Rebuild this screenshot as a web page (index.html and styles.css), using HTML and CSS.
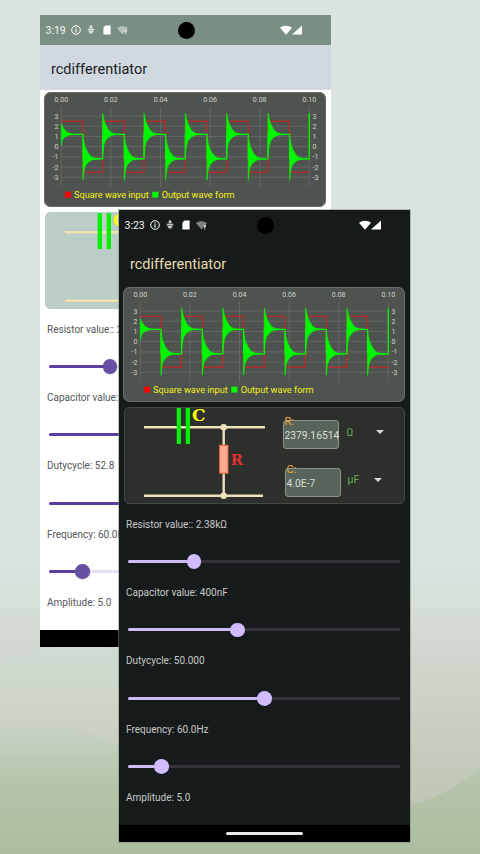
FILE: index.html
```html
<!DOCTYPE html>
<html lang="en">
<head>
<meta charset="utf-8">
<title>rcdifferentiator</title>
<link rel="stylesheet" href="styles.css">
</head>
<body>
<div class="canvas">
  <svg class="hills" viewBox="0 0 480 854" aria-hidden="true">
    <defs>
      <linearGradient id="sky" gradientUnits="userSpaceOnUse" x1="0" y1="560" x2="0" y2="800">
        <stop offset="0" stop-color="#dbe4df"/><stop offset="1" stop-color="#bec6b5"/>
      </linearGradient>
      <linearGradient id="hill-back" gradientUnits="userSpaceOnUse" x1="0" y1="646" x2="0" y2="760">
        <stop offset="0" stop-color="#d3dcd2"/><stop offset="1" stop-color="#c6cfbf"/>
      </linearGradient>
      <linearGradient id="hill-front" gradientUnits="userSpaceOnUse" x1="0" y1="720" x2="0" y2="854">
        <stop offset="0" stop-color="#cbd4c8"/><stop offset=".5" stop-color="#b6c3aa"/><stop offset="1" stop-color="#aebd9f"/>
      </linearGradient>
      <path id="pulse" d="M0 -21.4L1 -16.5L2 -12.5L3.3 -9.3L5 -6.1L6.7 -3.8L8 -2.4L10 -1.3L12 -.7L15 -.3L18 0L12 .3L9 1L6.7 2.3L5 3.8L3.3 5.7L2 8L1 12L0 21.4Z"/>
      <g id="chart-frame">
        <g class="grid">
          <path d="M17.3 14.7V94.7M66.9 14.7V94.7M116.5 14.7V94.7M166.1 14.7V94.7M215.7 14.7V94.7M265.3 14.7V94.7"/>
          <path d="M17.3 23.8H265.3M17.3 34H265.3M17.3 44.2H265.3M17.3 54.4H265.3M17.3 64.6H265.3M17.3 74.8H265.3M17.3 85H265.3"/>
        </g>
        <g class="tick tick-mid">
          <text x="17.3" y="9.8">0.00</text><text x="66.9" y="9.8">0.02</text><text x="116.5" y="9.8">0.04</text>
          <text x="166.1" y="9.8">0.06</text><text x="215.7" y="9.8">0.08</text><text x="265.3" y="9.8">0.10</text>
        </g>
        <g class="tick tick-end">
          <text x="14.5" y="26.4">3</text><text x="14.5" y="36.6">2</text><text x="14.5" y="46.8">1</text><text x="14.5" y="57">0</text>
          <text x="14.5" y="67.2">-1</text><text x="14.5" y="77.4">-2</text><text x="14.5" y="87.6">-3</text>
        </g>
        <g class="tick">
          <text x="268.5" y="26.4">3</text><text x="268.5" y="36.6">2</text><text x="268.5" y="46.8">1</text><text x="268.5" y="57">0</text>
          <text x="268.5" y="67.2">-1</text><text x="268.5" y="77.4">-2</text><text x="268.5" y="87.6">-3</text>
        </g>
        <rect class="key-red" x="21" y="99.5" width="6" height="5.8"/>
        <text class="legend" x="30" y="106">Square wave input</text>
        <rect class="key-green" x="108.3" y="99.5" width="6" height="5.8"/>
        <text class="legend" x="117.7" y="106">Output wave form</text>
      </g>
      <g id="circuit-art">
        <path class="wire" d="M20 20.3H141M20 88.7H139M99.7 20.3V38M99.7 66.3V88.7"/>
        <path class="cap" d="M52.7 0H57V37H52.7ZM61.7 0H66V37H61.7Z"/>
        <circle class="node" cx="99.7" cy="20.3" r="3.3"/>
        <circle class="node" cx="99.7" cy="88.7" r="3.3"/>
        <rect class="resistor" x="95.6" y="38.2" width="8.4" height="28"/>
        <text class="sym sym-c" x="68" y="13.6">C</text>
        <text class="sym sym-r" x="106.7" y="58">R</text>
      </g>
      <g id="ic-info"><circle cx="5" cy="5" r="4.3" class="ic-line"/><path d="M4.4 4.2H5.6V7.6H4.4ZM4.4 2.3H5.6V3.4H4.4Z"/></g>
      <g id="ic-download" class="ic-soft"><path d="M3.6 1.6A1.4 1.4 0 0 1 6.4 1.6V3.2H3.6ZM1.8 3.8H8.2V5.4H1.8ZM2.4 6H7.6L6.2 8.6H3.8Z"/></g>
      <g id="ic-sd"><path d="M3.4 .6H8.6V9.4H1.4V2.8Z"/></g>
      <g id="ic-wifi-off"><path class="ic-dim" d="M0 3.2C3.2 .6 7.8 .6 11 3.2L5.5 9.4Z"/><path class="ic-q" d="M7.6 5.2H10V6.8H9.2V8H8.2V6.2H9V6H7.6ZM8.2 8.5H9.2V9.5H8.2Z"/></g>
      <g id="ic-wifi"><path d="M0 2.8C3.3 .1 8.7 .1 12 2.8L6 9.8Z"/></g>
      <g id="ic-signal"><path d="M10 .5V9.5H0Z"/></g>
    </defs>
    <rect fill="url(#sky)" width="480" height="854"/>
    <path fill="url(#hill-back)" d="M0 664C30 650 60 644 90 646C160 652 240 700 300 720V854H0Z"/>
    <path fill="url(#hill-front)" d="M0 720C50 716 90 730 140 756C200 790 300 812 380 810C420 808 455 790 480 767V854H0Z"/>
  </svg>

  <section class="phone phone-light">
    <div class="status">
      <span class="time">3:19</span>
      <svg class="ic" viewBox="0 0 10 10"><use href="#ic-info"/></svg>
      <svg class="ic" viewBox="0 0 10 10"><use href="#ic-download"/></svg>
      <svg class="ic" viewBox="0 0 10 10"><use href="#ic-sd"/></svg>
      <svg class="ic ic-wide" viewBox="0 0 11 10"><use href="#ic-wifi-off"/></svg>
      <span class="status-right">
        <svg class="ic ic-wifi" viewBox="0 0 12 10"><use href="#ic-wifi"/></svg>
        <svg class="ic" viewBox="0 0 10 10"><use href="#ic-signal"/></svg>
      </span>
      <span class="camera"></span>
    </div>
    <header class="appbar">rcdifferentiator</header>
    <main class="content">
      <svg class="chart" viewBox="0 0 282 114">
        <use href="#chart-frame"/>
        <path class="sq" d="M17.3 29H39V80H58.6V29H80.3V80H100V29H121.6V80H141.3V29H163V80H182.6V29H204.3V80H224V29H245.6V80H265.3"/>
        <path class="out" d="M17.3 42.2H39V66.6H58.6V42.2H80.3V66.6H100V42.2H121.6V66.6H141.3V42.2H163V66.6H182.6V42.2H204.3V66.6H224V42.2H245.6V66.6H265.3V20.8"/>
        <g class="out">
          <use href="#pulse" transform="translate(17.3 42.2) scale(1 .52)"/>
          <use href="#pulse" x="39" y="66.6"/><use href="#pulse" x="58.6" y="42.2"/>
          <use href="#pulse" x="80.3" y="66.6"/><use href="#pulse" x="100" y="42.2"/>
          <use href="#pulse" x="121.6" y="66.6"/><use href="#pulse" x="141.3" y="42.2"/>
          <use href="#pulse" x="163" y="66.6"/><use href="#pulse" x="182.6" y="42.2"/>
          <use href="#pulse" x="204.3" y="66.6"/><use href="#pulse" x="224" y="42.2"/>
          <use href="#pulse" x="245.6" y="66.6"/>
        </g>
      </svg>
      <div class="circuit">
        <svg class="circuit-art" viewBox="0 0 155 96"><use href="#circuit-art"/></svg>
      </div>
      <div class="controls">
        <div class="control"><div class="label">Resistor value:: 2.20kΩ</div><div class="slider"><div class="fill" style="width:22.3%"></div></div></div>
        <div class="control"><div class="label">Capacitor value: 400nF</div><div class="slider"><div class="fill" style="width:40.1%"></div></div></div>
        <div class="control"><div class="label">Dutycycle: 52.8</div><div class="slider"><div class="fill" style="width:52.8%"></div></div></div>
        <div class="control"><div class="label">Frequency: 60.0Hz</div><div class="slider"><div class="fill" style="width:12.3%"></div></div></div>
        <div class="label">Amplitude: 5.0</div>
      </div>
    </main>
    <div class="navbar"></div>
  </section>

  <section class="phone phone-dark">
    <div class="status">
      <span class="time">3:23</span>
      <svg class="ic" viewBox="0 0 10 10"><use href="#ic-info"/></svg>
      <svg class="ic" viewBox="0 0 10 10"><use href="#ic-download"/></svg>
      <svg class="ic" viewBox="0 0 10 10"><use href="#ic-sd"/></svg>
      <svg class="ic ic-wide" viewBox="0 0 11 10"><use href="#ic-wifi-off"/></svg>
      <span class="status-right">
        <svg class="ic ic-wifi" viewBox="0 0 12 10"><use href="#ic-wifi"/></svg>
        <svg class="ic" viewBox="0 0 10 10"><use href="#ic-signal"/></svg>
      </span>
      <span class="camera"></span>
    </div>
    <header class="appbar">rcdifferentiator</header>
    <main class="content">
      <svg class="chart" viewBox="0 0 282 114">
        <use href="#chart-frame"/>
        <path class="sq" d="M17.3 29H38V80H58.6V29H79.3V80H100V29H120.6V80H141.3V29H162V80H182.6V29H203.3V80H224V29H244.6V80H265.3"/>
        <path class="out" d="M17.3 42.2H38V66.6H58.6V42.2H79.3V66.6H100V42.2H120.6V66.6H141.3V42.2H162V66.6H182.6V42.2H203.3V66.6H224V42.2H244.6V66.6H265.3V20.8"/>
        <g class="out">
          <use href="#pulse" transform="translate(17.3 42.2) scale(1 .52)"/>
          <use href="#pulse" x="38" y="66.6"/><use href="#pulse" x="58.6" y="42.2"/>
          <use href="#pulse" x="79.3" y="66.6"/><use href="#pulse" x="100" y="42.2"/>
          <use href="#pulse" x="120.6" y="66.6"/><use href="#pulse" x="141.3" y="42.2"/>
          <use href="#pulse" x="162" y="66.6"/><use href="#pulse" x="182.6" y="42.2"/>
          <use href="#pulse" x="203.3" y="66.6"/><use href="#pulse" x="224" y="42.2"/>
          <use href="#pulse" x="244.6" y="66.6"/>
        </g>
      </svg>
      <div class="circuit">
        <svg class="circuit-art" viewBox="0 0 155 96"><use href="#circuit-art"/></svg>
        <div class="values">
          <div class="value-row">
            <div class="field"><span class="field-label">R:</span><span class="field-value">2379.16514</span></div>
            <span class="unit">Ω</span><span class="caret"></span>
          </div>
          <div class="value-row value-row-c">
            <div class="field"><span class="field-label">C:</span><span class="field-value">4.0E-7</span></div>
            <span class="unit">μF</span><span class="caret"></span>
          </div>
        </div>
      </div>
      <div class="controls">
        <div class="control"><div class="label">Resistor value:: 2.38kΩ</div><div class="slider"><div class="fill" style="width:24.2%"></div></div></div>
        <div class="control"><div class="label">Capacitor value: 400nF</div><div class="slider"><div class="fill" style="width:40.1%"></div></div></div>
        <div class="control"><div class="label">Dutycycle: 50.000</div><div class="slider"><div class="fill" style="width:50.2%"></div></div></div>
        <div class="control"><div class="label">Frequency: 60.0Hz</div><div class="slider"><div class="fill" style="width:12.3%"></div></div></div>
        <div class="label">Amplitude: 5.0</div>
      </div>
    </main>
    <div class="navbar"><span class="pill"></span></div>
  </section>
</div>
</body>
</html>
```
FILE: styles.css
```css
* { box-sizing: border-box; }
html, body { margin: 0; padding: 0; }
body { width: 480px; height: 854px; overflow: hidden; font-family: Roboto, "Liberation Sans", sans-serif; }

.canvas { position: relative; width: 480px; height: 854px; overflow: hidden; background: #dce5e0; }
.hills { position: absolute; inset: 0; width: 480px; height: 854px; display: block; }

.grid path { fill: none; stroke: #6b6f6b; stroke-width: .7; }
.tick text { font-size: 7px; fill: #cfd2ce; font-family: Roboto, sans-serif; }
.tick-mid text { text-anchor: middle; }
.tick-end text { text-anchor: end; }
.legend { font-size: 9.2px; fill: #f2f21a; font-family: Roboto, sans-serif; }
.key-red { fill: #f00; }
.key-green { fill: #0f0; }
.sq { fill: none; stroke: #d82020; stroke-width: 1; }
path.out { fill: none; stroke: #00f500; stroke-width: 1.3; }
g.out { fill: #00f500; stroke: #00f500; stroke-width: .7; }

.wire { fill: none; stroke: var(--wire); stroke-width: 2.4; }
.cap { fill: #00f000; }
.node { fill: var(--wire); }
.resistor { fill: #ffab91; stroke: #e8603c; stroke-width: 1; }
.sym { font-family: "DejaVu Serif", serif; font-weight: 700; }
.sym-c { font-size: 17px; fill: #ffff00; }
.sym-r { font-size: 14.5px; fill: #e53030; }

.ic-line { fill: none; stroke: currentColor; stroke-width: 1; }
.ic-dim { fill: currentColor; opacity: .45; }
.ic-q { fill: currentColor; }
.ic-soft { opacity: .75; }

.phone { position: absolute; width: 291px; height: 632px; display: flex; flex-direction: column; overflow: hidden; }
.phone-light {
  left: 40px; top: 15px; background: #fff; color: #55585a; --wire: #efe2b0; --status: #7a8f83;
  --bar: #d1d8e0; --title: #1b1d20; --card: #bccdc7; --card-line: #bccdc7;
  --active: #5a3fa0; --inactive: #e8e0ef; --thumb: #6750a4;
}
.phone-dark {
  left: 119px; top: 210px; background: #171a1a; color: #c8c9c8; --wire: #eee2bc; --status: #171a1a;
  --bar: #171a1a; --title: #e6dcae; --card: #2d2f2c; --card-line: #454743;
  --active: #cfbcfb; --inactive: #353339; --thumb: #d0bcff;
  box-shadow: 0 0 0 1px rgba(120, 140, 120, .5);
}

.status { position: relative; height: 30px; flex: none; display: flex; align-items: center; padding: 0 29px 0 5.5px; background: var(--status); color: #fff; }
.time { font-size: 10.5px; width: 25px; color: #f4f6f4; }
.ic { width: 10px; height: 10px; margin-right: 5.5px; fill: currentColor; display: block; flex: none; }
.ic-wide { width: 11px; }
.status-right { margin-left: auto; display: flex; align-items: center; }
.status-right .ic { margin-right: 0; }
.status-right .ic-wifi { width: 12px; }
.camera { position: absolute; left: 137.5px; top: 6.5px; width: 17px; height: 17px; border-radius: 50%; background: #000; }

.appbar { height: 45px; flex: none; display: flex; align-items: center; padding: 3px 0 0 11px; font-size: 14.5px; background: var(--bar); color: var(--title); }

.content { flex: 1; min-height: 0; padding-top: 2px; display: flex; flex-direction: column; }
.chart { width: 282px; height: 114.5px; margin-left: 4.3px; display: block; flex: none; background: #4f534f; box-shadow: inset 0 0 0 1px #676b67; border-radius: 7px; overflow: hidden; }

.circuit { width: 281px; height: 96.5px; margin: 5.5px 0 0 5px; display: flex; flex: none; background: var(--card); border: 1px solid var(--card-line); border-radius: 5px; overflow: hidden; }
.circuit-art { width: 155px; height: 96px; flex: none; display: block; margin: -1px 0 0 -1px; }
.values { padding: 12px 0 0 3.5px; display: flex; flex-direction: column; gap: 19.5px; }
.value-row { display: flex; align-items: center; }
.value-row-c { padding-left: 2px; }
.field { width: 56.5px; height: 28.7px; display: flex; flex-direction: column; padding: 0 1px; background: #586359; border: 1px solid #8d9283; border-radius: 3px; }
.field-label { font-size: 11px; line-height: 11px; margin-top: -5px; color: #eeae38; }
.field-value { font-size: 10.3px; line-height: 12px; margin-top: 3px; color: #dcdedc; white-space: nowrap; }
.unit { font-size: 10px; width: 29px; margin: -3px 0 0 7.5px; color: #6aa85c; }
.value-row-c .unit { width: 26px; margin-left: 6.5px; margin-top: -6px; font-size: 10.5px; }
.caret { width: 0; height: 0; margin-top: -5px; border-left: 4px solid transparent; border-right: 4px solid transparent; border-top: 4px solid #d6d8d6; }

.controls { padding-top: 14px; }
.control { height: 68.4px; }
.label { height: 14px; padding-left: 7px; font-size: 10px; line-height: 14px; white-space: nowrap; }
.slider { position: relative; width: 271.7px; height: 3px; margin: 28.5px 0 0 9.3px; border-radius: 2px; background: var(--inactive); }
.fill { position: relative; height: 3px; border-radius: 2px; background: var(--active); }
.fill::after { content: ""; position: absolute; right: -7.3px; top: -5.8px; width: 14.6px; height: 14.6px; border-radius: 50%; background: var(--thumb); box-shadow: 0 .5px 1px rgba(0,0,0,.25); }

.navbar { height: 17px; flex: none; background: #000; display: flex; align-items: center; justify-content: center; }
.pill { width: 77px; height: 3px; border-radius: 2px; background: #e8e8e8; }
```
